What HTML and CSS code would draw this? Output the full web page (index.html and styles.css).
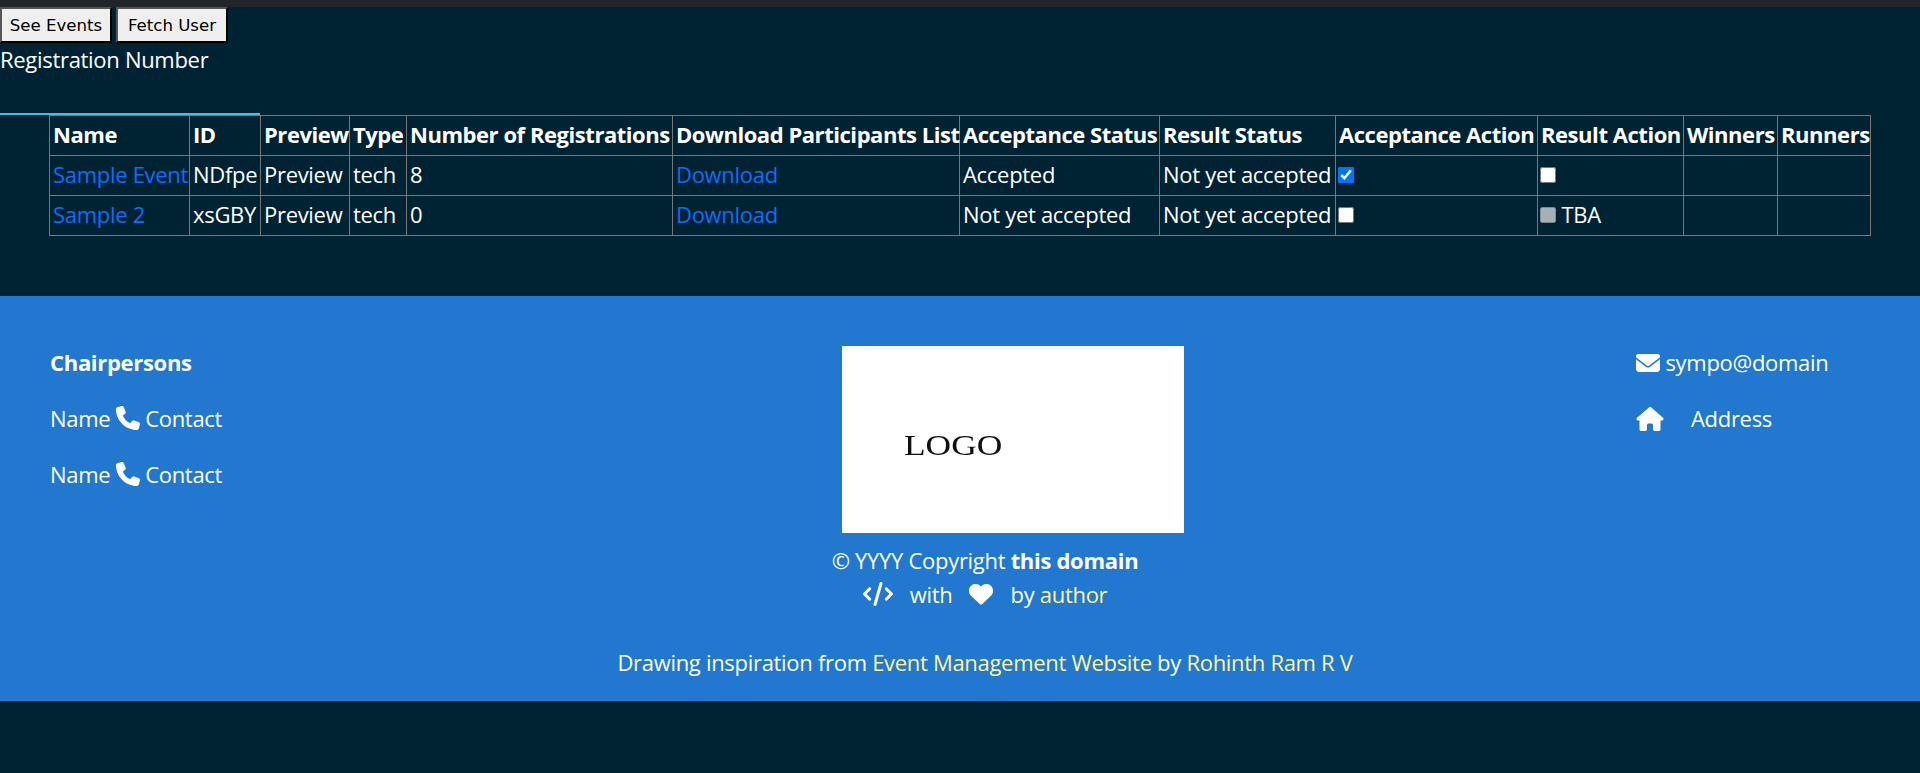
FILE: index.html
```html
<!DOCTYPE html>
<html>
    <head>
        <meta charset="utf-8">
        <title>Events</title>
        <link rel="stylesheet" href="styles.css">
    </head>
    <body>
        <svg class="icon-defs" width="0" height="0">
            <symbol id="i-phone" viewBox="0 0 512 512"><path d="M164.9 24.6c-7.7-18.6-28-28.5-47.4-23.2l-88 24C12.1 30.2 0 46 0 64C0 311.4 200.6 512 448 512c18 0 33.8-12.1 38.6-29.5l24-88c5.3-19.4-4.6-39.7-23.2-47.4l-96-40c-16.3-6.8-35.2-2.1-46.3 11.6L304.7 368C234.3 334.7 177.3 277.7 144 207.3L193.3 167c13.7-11.2 18.4-30 11.6-46.3l-40-96z"/></symbol>
            <symbol id="i-mail" viewBox="0 0 512 512"><path d="M48 64C21.5 64 0 85.5 0 112c0 15.1 7.1 29.3 19.2 38.4L236.8 313.6c11.4 8.5 27 8.5 38.4 0L492.8 150.4c12.1-9.1 19.2-23.3 19.2-38.4c0-26.5-21.5-48-48-48H48zM0 176V384c0 35.3 28.7 64 64 64H448c35.3 0 64-28.7 64-64V176L294.4 339.2c-22.8 17.1-54 17.1-76.8 0L0 176z"/></symbol>
            <symbol id="i-home" viewBox="0 0 576 512"><path d="M575.8 255.5c0 18-15 32.1-32 32.1h-32l.7 160.2c0 2.7-.2 5.4-.5 8.1V472c0 22.1-17.9 40-40 40H456c-1.1 0-2.2 0-3.3-.1c-1.4 .1-2.8 .1-4.2 .1H416 392c-22.1 0-40-17.9-40-40V448 384c0-17.7-14.3-32-32-32H256c-17.7 0-32 14.3-32 32v64 24c0 22.1-17.9 40-40 40H160 128.1c-1.5 0-3-.1-4.5-.2c-1.2 .1-2.4 .2-3.6 .2H104c-22.1 0-40-17.9-40-40V360c0-.9 0-1.9 .1-2.8V287.6H32c-18 0-32-14-32-32.1c0-9 3-17 10-24L266.4 8c7-7 15-8 22-8s15 2 21 7L564.8 231.5c8 7 12 15 11 24z"/></symbol>
            <symbol id="i-code" viewBox="0 0 640 512"><path d="M392.8 1.2c-17-4.9-34.7 5-39.6 22l-128 448c-4.9 17 5 34.7 22 39.6s34.7-5 39.6-22l128-448c4.9-17-5-34.7-22-39.6zm80.6 120.1c-12.5 12.5-12.5 32.8 0 45.3L562.7 256l-89.4 89.4c-12.5 12.5-12.5 32.8 0 45.3s32.8 12.5 45.3 0l112-112c12.5-12.5 12.5-32.8 0-45.3l-112-112c-12.5-12.5-32.8-12.5-45.3 0zm-306.7 0c-12.5-12.5-32.8-12.5-45.3 0l-112 112c-12.5 12.5-12.5 32.8 0 45.3l112 112c12.5 12.5 32.8 12.5 45.3 0s12.5-32.8 0-45.3L77.3 256l89.4-89.4c12.5-12.5 12.5-32.8 0-45.3z"/></symbol>
            <symbol id="i-heart" viewBox="0 0 512 512"><path d="M47.6 300.4L228.3 469.1c7.5 7 17.4 10.9 27.7 10.9s20.2-3.9 27.7-10.9L464.4 300.4c30.4-28.3 47.6-68 47.6-109.5v-5.8c0-69.9-50.5-129.5-119.4-141C347 36.5 300.6 51.4 268 84L256 96 244 84c-32.6-32.6-79-47.5-124.6-39.9C50.5 55.6 0 115.2 0 185.1v5.8c0 41.5 17.2 81.2 47.6 109.5z"/></symbol>
        </svg>

        <div class="top-bar"></div>

        <div class="actions">
            <button class="action-btn">See Events</button>
            <button class="action-btn">Fetch User</button>
        </div>
        <div class="reg-number">Registration Number</div>

        <div class="tab-line"></div>
        <div class="table-wrap">
            <table class="events">
                <colgroup>
                    <col class="c-name"><col class="c-id"><col class="c-preview"><col class="c-type">
                    <col class="c-count"><col class="c-list"><col class="c-accept"><col class="c-result">
                    <col class="c-accept-act"><col class="c-result-act"><col class="c-winners"><col class="c-runners">
                </colgroup>
                <thead>
                    <tr>
                        <th>Name</th><th>ID</th><th>Preview</th><th>Type</th>
                        <th>Number of Registrations</th><th>Download Participants List</th>
                        <th>Acceptance Status</th><th>Result Status</th>
                        <th>Acceptance Action</th><th>Result Action</th><th>Winners</th><th>Runners</th>
                    </tr>
                </thead>
                <tbody>
                    <tr>
                        <td><a href="#">Sample Event</a></td><td>NDfpe</td><td>Preview</td><td>tech</td><td>8</td>
                        <td><a href="#">Download</a></td><td>Accepted</td><td>Not yet accepted</td>
                        <td><input type="checkbox" checked></td><td><input type="checkbox"></td><td></td><td></td>
                    </tr>
                    <tr>
                        <td><a href="#">Sample 2</a></td><td>xsGBY</td><td>Preview</td><td>tech</td><td>0</td>
                        <td><a href="#">Download</a></td><td>Not yet accepted</td><td>Not yet accepted</td>
                        <td><input type="checkbox"></td><td><input type="checkbox" disabled> TBA</td><td></td><td></td>
                    </tr>
                </tbody>
            </table>
        </div>

        <footer class="site-footer">
            <div class="footer-main">
                <div class="footer-left">
                    <p class="footer-row"><b>Chairpersons</b></p>
                    <p class="footer-row">Name <svg class="ic ic-phone"><use href="#i-phone"/></svg> Contact</p>
                    <p class="footer-row">Name <svg class="ic ic-phone"><use href="#i-phone"/></svg> Contact</p>
                </div>
                <div class="footer-center">
                    <div class="logo"><span class="logo-text">LOGO</span></div>
                    <div class="copy">© YYYY Copyright <b>this domain</b></div>
                    <div class="made">
                        <svg class="ic ic-code"><use href="#i-code"/></svg>
                        <span>with</span>
                        <svg class="ic ic-heart"><use href="#i-heart"/></svg>
                        <span>by <a href="#">author</a></span>
                    </div>
                </div>
                <div class="footer-right">
                    <p class="footer-row"><svg class="ic ic-mail"><use href="#i-mail"/></svg> sympo@domain</p>
                    <p class="footer-row address"><svg class="ic ic-home"><use href="#i-home"/></svg><span>Address</span></p>
                </div>
            </div>
            <div class="credit">Drawing inspiration from <a href="#">Event Management Website</a> by <a href="#">Rohinth Ram R V</a></div>
        </footer>
    </body>
</html>
```

FILE: styles.css
```css
body {
    background: #002333;
    color: #fff;
    margin: 0;
    font-family: "Open Sans", "Noto Sans", sans-serif;
    font-size: 22px;
    letter-spacing: -0.3px;
    line-height: 30px;
}
.icon-defs {
    position: absolute;
}
.top-bar {
    height: 7px;
    background: #212529;
}
.actions {
    display: flex;
    gap: 4px;
}
.action-btn {
    width: 112px;
    height: 36px;
    padding: 0;
    background: #efefef;
    color: #000;
    border: 2px outset #555;
    border-color: #555 #000 #000 #555;
    font-family: "DejaVu Sans", sans-serif;
    font-size: 16.6px;
    letter-spacing: 0;
}
.reg-number {
    margin-top: 1px;
}
.tab-line {
    width: 260px;
    height: 2px;
    margin-top: 39px;
    background: #3fc1e0;
}
.table-wrap {
    padding: 0 49px;
}
.events {
    table-layout: fixed;
    width: 1822px;
    border-collapse: collapse;
    border: 1px solid #777;
}
.events th, .events td {
    height: 40px;
    padding: 0 3px 3px;
    border: 1px solid #777;
    text-align: left;
    white-space: nowrap;
    box-sizing: border-box;
}
.events th {
    font-weight: 700;
    letter-spacing: -0.45px;
}
.events a {
    color: #0d6efd;
    text-decoration: none;
}
.events input {
    width: 16px;
    height: 16px;
    margin: 0 0 0 -1px;
    vertical-align: 0;
}
.c-name { width: 140px; }
.c-id { width: 71px; }
.c-preview { width: 89px; }
.c-type { width: 57px; }
.c-count { width: 266px; }
.c-list { width: 287px; }
.c-accept { width: 200px; }
.c-result { width: 176px; }
.c-accept-act { width: 202px; }
.c-result-act { width: 146px; }
.c-winners { width: 94px; }
.c-runners { width: 93px; }

.site-footer {
    margin-top: 60px;
    height: 405px;
    background: #2178ce;
}
.site-footer a {
    color: #fff59d;
    text-decoration: none;
}
.footer-main {
    display: flex;
    padding: 50px 0 0 50px;
}
.footer-left {
    width: 284px;
    padding-top: 1px;
}
.footer-center {
    width: 1302px;
    display: flex;
    flex-direction: column;
    align-items: center;
}
.footer-right {
    flex: 1;
    padding-top: 1px;
}
.footer-row {
    margin: 0 0 26px;
}
.ic {
    fill: #fff;
    vertical-align: -3px;
}
.ic-phone { width: 24px; height: 24px; }
.ic-mail { width: 24px; height: 24px; vertical-align: -4px; }
.ic-home { width: 28px; height: 24px; vertical-align: -4px; }
.ic-code { width: 30px; height: 24px; vertical-align: -4px; }
.ic-heart { width: 24px; height: 24px; vertical-align: -4px; }
.address .ic {
    margin-right: 27px;
}
.logo {
    width: 342px;
    height: 187px;
    margin-left: 56px;
    background: #fff;
    box-sizing: border-box;
    padding: 82px 0 0 62px;
}
.logo-text {
    display: block;
    color: #111;
    font-family: "Liberation Serif", serif;
    font-size: 30px;
    line-height: 34px;
    letter-spacing: 0;
    transform: scaleX(1.18);
    transform-origin: left;
    filter: blur(0.3px);
}
.copy {
    margin-top: 10px;
    line-height: 34px;
}
.made {
    display: flex;
    align-items: center;
    gap: 17px;
    line-height: 34px;
}
.credit {
    margin-top: 36px;
    text-align: center;
    width: 1970px;
}
```
